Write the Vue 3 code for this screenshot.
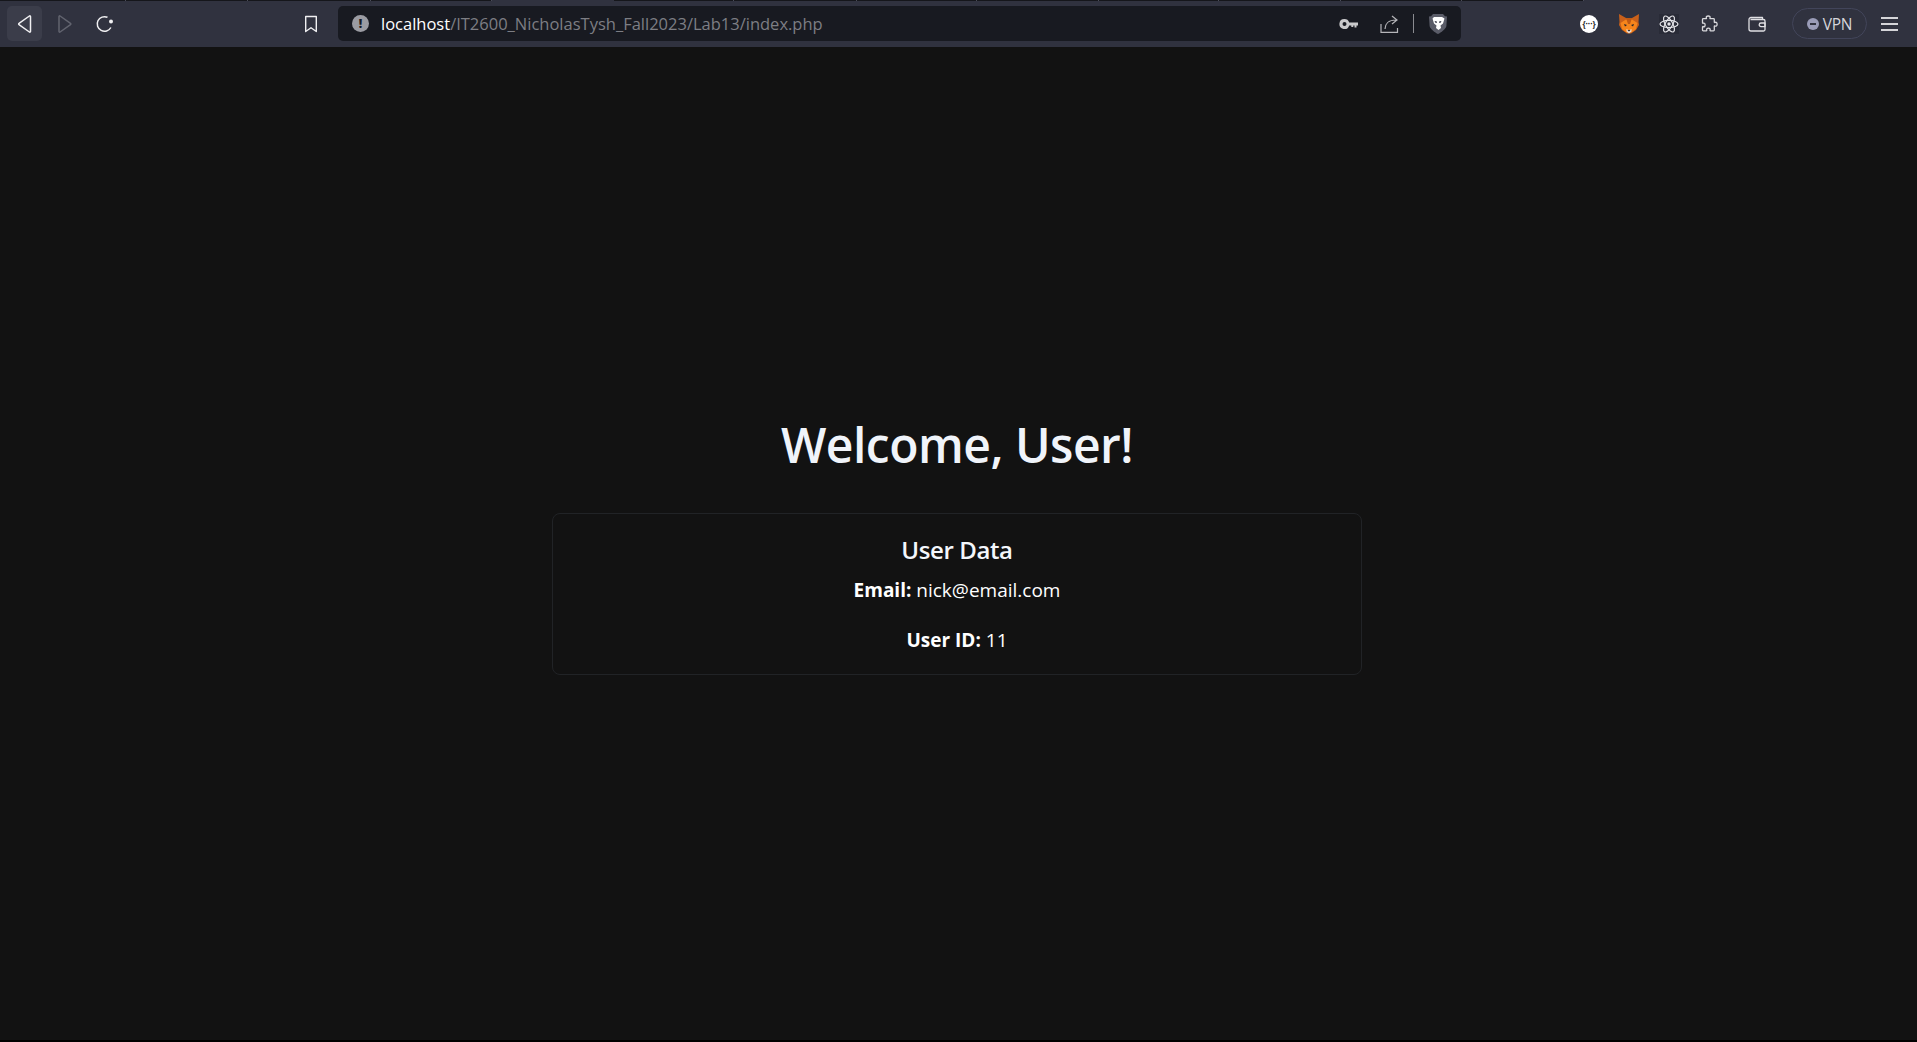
<script setup>
const tabs = [
  { w: 126 }, { w: 122 }, { w: 123 }, { w: 121 },
  { w: 122, active: true }, { w: 120 }, { w: 123 }, { w: 120 },
  { w: 122 }, { w: 120 }, { w: 122 }, { w: 121 }, { w: 122 },
]
</script>

<template>
  <div class="screen">
    <div class="tabstrip">
      <span v-for="(t, i) in tabs" :key="i" class="tab" :class="{ active: t.active }" :style="{ width: t.w + 'px' }"></span>
    </div>
    <header class="toolbar">
      <div class="nav">
        <button class="btn hover">
          <svg width="20" height="20" viewBox="0 0 20 20" fill="none" stroke="#f0f0f2" stroke-width="1.500" stroke-linejoin="round"><path d="M15.500 2.500v15a.7.7 0 0 1-1.100.5L4 10.600a.7.7 0 0 1 0-1.200l10.400-7.400a.7.7 0 0 1 1.100.5z"/></svg>
        </button>
        <button class="btn">
          <svg width="20" height="20" viewBox="0 0 20 20" fill="none" stroke="#62646f" stroke-width="1.500" stroke-linejoin="round"><path d="M4 2.500v15a.7.7 0 0 0 1.100.5l10.400-7.400a.7.7 0 0 0 0-1.200L5.100 2a.7.7 0 0 0-1.100.5z"/></svg>
        </button>
        <button class="btn">
          <svg width="20" height="20" viewBox="0 0 20 20" fill="none" stroke="#f0f0f2" stroke-width="1.500"><path d="M15.900 13.500A7.300 7.300 0 1 1 12.500 3.300"/><circle cx="16" cy="7.500" r="2" fill="#f0f0f2" stroke="none"/></svg>
        </button>
      </div>
      <button class="btn bookmark">
        <svg width="16" height="20" viewBox="0 0 16 20" fill="none" stroke="#f0f0f2" stroke-width="1.400" stroke-linejoin="round"><path d="M2.700 2.500h10.600v15L8 13.700 2.700 17.500z"/></svg>
      </button>
      <div class="urlbar">
        <span class="info">!</span>
        <span class="url"><span class="host">localhost</span><span class="path">/IT2600_NicholasTysh_Fall2023/Lab13/index.php</span></span>
        <span class="spacer"></span>
        <svg class="key" width="20" height="12" viewBox="0 0 20 12"><path fill-rule="evenodd" fill="#c9c9cb" d="M5.500 1a5 5 0 0 1 4.700 3.400H19v3h-1.500v2h-2v-2h-1.200v1.500h-2V7.400h-2.100A5 5 0 1 1 5.500 1zm0 3a2 2 0 1 0 0 4 2 2 0 0 0 0-4z"/></svg>
        <svg class="share" width="19" height="20" viewBox="0 0 19 20" fill="none" stroke="#b5b5b9" stroke-width="1.200"><path d="M1 10v8.300h16.500V14M5 15c0-5 3.500-9 11-9M12 2l5 4-5 4"/></svg>
        <span class="divider"></span>
        <svg class="brave" width="20" height="22" viewBox="0 0 20 22"><path fill="#5a5c68" d="M5 1h10l2 2.200 2 .3-.6 9.500c-.5 3-5.400 6.600-8.400 8-3-1.400-7.900-5-8.400-8L1 3.500l2-.3z"/><path fill="#fff" d="M6 4h8l2.500 1.500-1.500 5-2.500 2 .5 2.500-2.500 2-2.500-2 .5-2.500-2.500-2-1.500-5z"/><path fill="#5a5c68" d="M6.500 8h2l.5 2H7.500zM13.500 8h-2l-.5 2h1.500z"/></svg>
      </div>
      <div class="extensions">
        <span class="ext"><span class="dots">{···}</span></span>
        <span class="ext">
          <svg width="22" height="22" viewBox="0 0 22 22"><path fill="#c9601a" d="M1 1l7 4h6l7-4-.5 8 .5 3-3 5-5 3.500H9L4 17l-3-5 .5-3z"/><path fill="#f6851b" d="M2.500 10L8 6.500h6l5.500 3.500-1.500 6-4.500 3.500h-5L4 16z"/><path fill="#c05a15" d="M8 5h6l-2 6h-2z"/><path fill="#23242c" d="M6 11l3 1-2 1.500zM16 11l-3 1 2 1.500z"/><path fill="#eadbd0" d="M8.500 16L11 17.500l2.500-1.500v2.500L11 20.500l-2.500-2z"/><path fill="#23242c" d="M9.500 17h3L11 18.500z"/></svg>
        </span>
        <span class="ext">
          <span class="atom">
            <svg width="20" height="20" viewBox="0 0 20 20" fill="none" stroke="#e4e4e8" stroke-width="1.200"><ellipse cx="10" cy="10" rx="9" ry="3.600"/><ellipse cx="10" cy="10" rx="9" ry="3.600" transform="rotate(60 10 10)"/><ellipse cx="10" cy="10" rx="9" ry="3.600" transform="rotate(120 10 10)"/><circle cx="10" cy="10" r="1.700" fill="#e4e4e8" stroke="none"/></svg>
          </span>
        </span>
        <span class="ext">
          <svg width="18" height="18" viewBox="0 0 18 18" fill="none" stroke="#d8d8dc" stroke-width="1.300" stroke-linejoin="round"><path d="M2.500 4.500c0-.5.300-.8.800-.8H6c.5 0 .6-.4.400-.8C5.800 1.800 6.800 1 8.200 1s2.400.8 1.800 1.900c-.2.400-.1.800.4.800h3.100c.5 0 .8.300.8.800V7c0 .5.400.6.800.4 1.100-.6 2 .4 2 1.800s-.9 2.400-2 1.800c-.4-.2-.8-.1-.8.400v3.600c0 .5-.3.800-.8.800h-3c-.5 0-.6-.4-.4-.8.500-1-.4-1.800-1.700-1.800s-2.200.8-1.700 1.800c.2.400.1.800-.4.800H3.300c-.5 0-.8-.3-.8-.8V12c0-.5.400-.6.800-.4 1 .5 1.800-.4 1.800-1.700S4.300 7.700 3.300 8.200c-.4.200-.8.100-.8-.4z"/></svg>
        </span>
        <span class="ext wallet">
          <svg width="18" height="16" viewBox="0 0 18 16" fill="none" stroke="#e0e0e4" stroke-width="1.300" stroke-linejoin="round"><path d="M14.500 3.500V1.500H3a2 2 0 0 0-2 2V13a2 2 0 0 0 2 2h12.500a1.500 1.500 0 0 0 1.500-1.500V5a1.500 1.500 0 0 0-1.500-1.500H2.500"/><path d="M17 7h-4a1.800 1.800 0 0 0 0 3.600h4z"/></svg>
        </span>
      </div>
      <div class="vpn"><span class="vpn-dot"></span>VPN</div>
      <div class="menu"><i></i><i></i><i></i></div>
    </header>
    <main class="page">
      <h1>Welcome, User!</h1>
      <section class="card">
        <h2>User Data</h2>
        <p><strong>Email:</strong> nick@email.com</p>
        <p><strong>User ID:</strong> 11</p>
      </section>
    </main>
  </div>
</template>

<style>
html, body { margin: 0; background: #000; }
</style>

<style scoped>
.screen {
  width: 1917px;
  height: 1042px;
  display: flex;
  flex-direction: column;
  overflow: hidden;
  position: relative;
  background: #000;
  font-family: "Open Sans", "Noto Sans", sans-serif;
}
.tabstrip {
  height: 1px;
  background: #30323f;
  display: flex;
  flex: none;
}
.tab {
  flex: none;
  box-sizing: border-box;
  height: 1px;
  background: #15161b;
  border-right: 1px solid #4a4c58;
}
.tab.active { background: #30323f; border-right-color: #30323f; }
.toolbar {
  height: 46px;
  flex: none;
  background: #30323f;
  display: flex;
  align-items: center;
  padding-bottom: 1px;
  box-sizing: border-box;
}
.nav { display: flex; gap: 5px; margin-left: 7px; flex: none; }
.btn {
  width: 35px;
  height: 35px;
  padding: 0;
  border: 0;
  border-radius: 5px;
  background: transparent;
  display: flex;
  align-items: center;
  justify-content: center;
  flex: none;
}
.hover { background: #3b3d4a; }
.bookmark { margin-left: 171px; }
.urlbar {
  width: 1123px;
  height: 35px;
  margin-left: 10px;
  background: #181a21;
  border-radius: 5px;
  display: flex;
  align-items: center;
  box-sizing: border-box;
  padding: 0 13px 0 14px;
  flex: none;
}
.info {
  width: 17px;
  height: 17px;
  border-radius: 50%;
  background: #9b9ca3;
  color: #181a21;
  font-size: 12px;
  font-weight: 800;
  line-height: 17px;
  text-align: center;
  flex: none;
}
.url { margin-left: 12px; font-size: 16.500px; white-space: nowrap; }
.host { color: #fff; }
.path { color: #7d7e84; }
.spacer { flex: 1; }
.key { margin-right: 21px; }
.share { margin-right: 14px; }
.divider { width: 1px; height: 19px; background: #8a8b90; margin-right: 14px; }
.extensions { display: flex; align-items: center; margin-left: 108px; flex: none; }
.ext { width: 40px; display: flex; justify-content: center; align-items: center; }
.atom {
  width: 20px;
  height: 20px;
  background: #292b37;
  display: block;
}
.dots {
  width: 18px;
  height: 18px;
  border-radius: 50%;
  background: #fff;
  color: #222;
  font-size: 8px;
  font-weight: 700;
  line-height: 18px;
  text-align: center;
  display: block;
}
.wallet { margin-left: 8px; }
.vpn {
  margin-left: 15px;
  width: 75px;
  height: 31px;
  box-sizing: border-box;
  border: 1px solid #42455a;
  border-radius: 16px;
  display: flex;
  align-items: center;
  justify-content: center;
  gap: 4px;
  color: #d5d5da;
  font-size: 15.500px;
  letter-spacing: -0.300px;
  flex: none;
}
.vpn-dot {
  width: 12px;
  height: 12px;
  border-radius: 50%;
  background: #9a9cb8;
  position: relative;
}
.vpn-dot::after {
  content: "";
  position: absolute;
  left: 3px;
  top: 5px;
  width: 6px;
  height: 2px;
  background: #30323f;
}
.menu { margin-left: 14px; display: flex; flex-direction: column; gap: 4px; flex: none; }
.menu i { display: block; width: 17px; height: 2px; background: #d5d5d9; }
.page {
  flex: 1;
  display: flex;
  flex-direction: column;
  align-items: center;
  padding: 369px 3px 0 0;
  margin-bottom: 2px;
  background: #121212;
  color: #f0f4fa;
}
h1 {
  margin: 0;
  font-size: 48px;
  font-weight: 600;
  line-height: 58px;
  letter-spacing: -0.500px;
}
.card {
  width: 810px;
  height: 162px;
  margin-top: 39px;
  box-sizing: border-box;
  border: 1px solid #212326;
  border-radius: 8px;
  text-align: center;
  padding-top: 21px;
  color: #fff;
}
h2 {
  margin: 0 0 13px;
  font-size: 24px;
  font-weight: 600;
  line-height: 30px;
  letter-spacing: -0.400px;
  color: #f4f7fc;
}
p {
  margin: 0 0 26px;
  font-size: 19px;
  line-height: 24px;
}
strong { font-weight: 700; }
</style>
